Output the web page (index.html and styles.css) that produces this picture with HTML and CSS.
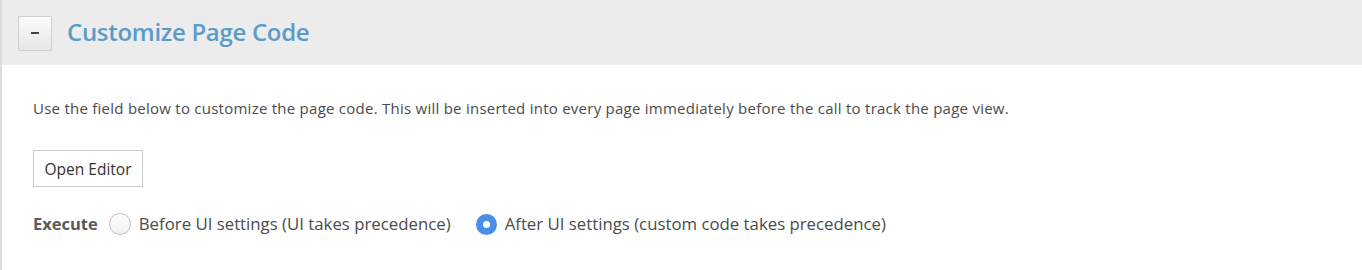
FILE: index.html
```html
<!DOCTYPE html>
<html>
<head>
<meta charset="utf-8">
<link rel="stylesheet" href="styles.css">
</head>
<body>
<div class="panel">
  <div class="panel-header">
    <button class="toggle" type="button"><span class="minus"></span></button>
    <h2 class="title">Customize Page Code</h2>
  </div>
  <div class="panel-body">
    <p class="desc">Use the field below to customize the page code. This will be inserted into every page immediately before the call to track the page view.</p>
    <button class="editor-btn" type="button">Open Editor</button>
    <div class="execute">
      <span class="exec-label">Execute</span>
      <label class="opt"><span class="radio"></span>Before UI settings (UI takes precedence)</label>
      <label class="opt"><span class="radio checked"></span>After UI settings (custom code takes precedence)</label>
    </div>
  </div>
</div>
</body>
</html>
```
FILE: styles.css
```css
html, body {
  margin: 0;
  padding: 0;
  background: #fff;
}
body {
  font-family: "Open Sans", "Liberation Sans", sans-serif;
  color: #4b4b4b;
}
.panel {
  border-left: 2px solid #dcdcdc;
  height: 270px;
  box-sizing: border-box;
}
.panel-header {
  height: 65px;
  background: #ececec;
  display: flex;
  align-items: center;
  padding-left: 16px;
  box-sizing: border-box;
}
.toggle {
  width: 34px;
  height: 35px;
  margin: 0;
  padding: 0;
  border: 1px solid #cfcfcf;
  border-radius: 1px;
  background: linear-gradient(#fbfbfb, #e6e6e6);
  display: flex;
  align-items: center;
  justify-content: center;
  margin-top: 1px;
}
.minus {
  display: block;
  width: 8px;
  height: 2px;
  background: #444;
}
.title {
  margin: 0 0 2px 15px;
  font-size: 24px;
  font-weight: 600;
  color: #5b9bc8;
  letter-spacing: -0.3px;
}
.panel-body {
  padding: 33px 0 0 31px;
}
.desc {
  margin: 0;
  font-size: 15px;
  line-height: 20px;
  letter-spacing: 0.25px;
}
.editor-btn {
  display: block;
  margin-top: 32px;
  width: 110px;
  height: 37px;
  border: 1px solid #cbcbcb;
  background: #fff;
  font-family: "Open Sans", "Liberation Sans", sans-serif;
  font-size: 15.5px;
  color: #333;
  padding: 0;
  border-radius: 0;
}
.execute {
  margin-top: 25px;
  display: flex;
  align-items: center;
  font-size: 16.8px;
  line-height: 24px;
}
.exec-label {
  font-size: 16.5px;
  font-weight: 700;
  color: #5a5a5a;
  margin-right: 11px;
}
.opt {
  display: flex;
  align-items: center;
  margin-right: 25px;
}
.radio {
  width: 20px;
  height: 20px;
  border: 1px solid #bdbdbd;
  border-radius: 50%;
  background: linear-gradient(#fff, #f2f2f2);
  margin-right: 8px;
  position: relative;
}
.radio.checked {
  width: 21px;
  height: 21px;
  border: 0;
  background: #4a8fe6;
}
.radio.checked::after {
  content: "";
  position: absolute;
  left: 7px;
  top: 7px;
  width: 7px;
  height: 7px;
  border-radius: 50%;
  background: #fff;
}
```
